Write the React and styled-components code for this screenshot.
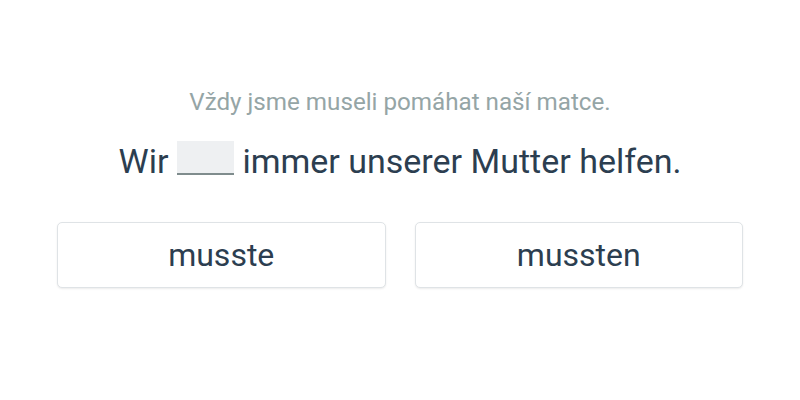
import React from 'react';
import styled, { createGlobalStyle } from 'styled-components';

const Global = createGlobalStyle`
  body {
    margin: 0;
    background: #fff;
    font-family: Roboto, "Noto Sans", sans-serif;
  }
`;

const Page = styled.div`
  width: 800px;
  height: 400px;
  box-sizing: border-box;
  padding: 88px 57px 0 57px;
  display: flex;
  flex-direction: column;
  align-items: stretch;
`;

const Hint = styled.p`
  margin: 0;
  text-align: center;
  color: #95a5a6;
  font-size: 24.2px;
  line-height: 28px;
`;

const Sentence = styled.h1`
  margin: 23px 0 0 0;
  text-align: center;
  color: #2c3e50;
  font-size: 34px;
  font-weight: 400;
  line-height: 44px;
`;

const Blank = styled.span`
  display: inline-block;
  width: 57px;
  height: 32px;
  vertical-align: -2px;
  background: #eef0f2;
  border-bottom: 2px solid #7f8c8d;
`;

const Choices = styled.div`
  margin-top: 39px;
  display: grid;
  grid-template-columns: 1fr 1fr;
  gap: 29px;
`;

const Choice = styled.button`
  height: 66px;
  background: #fff;
  border: 1px solid #dfe3e6;
  border-radius: 5px;
  box-shadow: 0 1px 2px rgba(0, 0, 0, 0.08);
  font-family: Roboto, "Noto Sans", sans-serif;
  font-size: 32px;
  color: #2c3e50;
  cursor: pointer;
`;

export default function App() {
  return (
    <>
      <Global />
      <Page>
        <Hint>Vždy jsme museli pomáhat naší matce.</Hint>
        <Sentence>
          Wir <Blank /> immer unserer Mutter helfen.
        </Sentence>
        <Choices>
          <Choice>musste</Choice>
          <Choice>mussten</Choice>
        </Choices>
      </Page>
    </>
  );
}
